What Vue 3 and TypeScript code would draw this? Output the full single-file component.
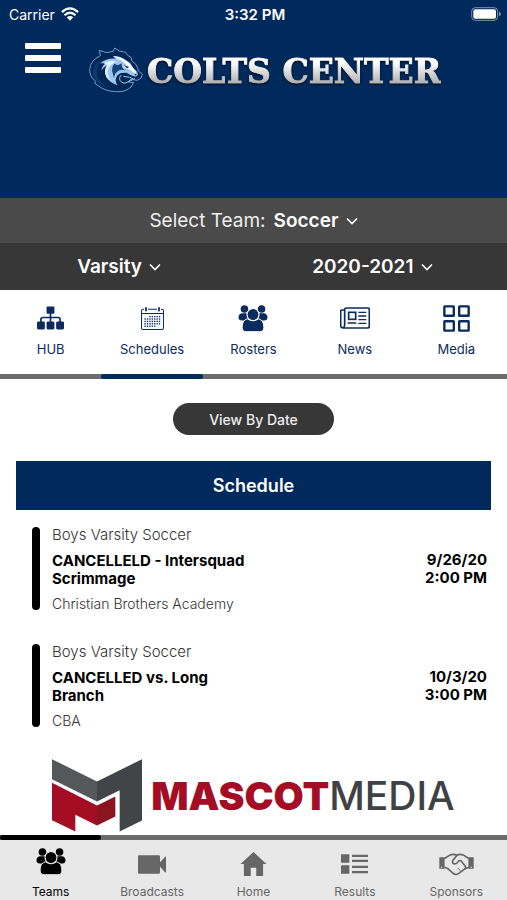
<script setup lang="ts">
import { ref } from 'vue'

type IconName =
  | 'hub' | 'calendar' | 'people' | 'news' | 'grid'
  | 'camera' | 'home' | 'list' | 'handshake'

interface NavItem {
  label: string
  icon: IconName
}

interface Game {
  team: string
  title: string
  place: string
  date: string
  time: string
}

const team = ref('Soccer')
const level = ref('Varsity')
const season = ref('2020-2021')

const tabs: NavItem[] = [
  { label: 'HUB', icon: 'hub' },
  { label: 'Schedules', icon: 'calendar' },
  { label: 'Rosters', icon: 'people' },
  { label: 'News', icon: 'news' },
  { label: 'Media', icon: 'grid' },
]
const activeTab = ref('Schedules')

const sections: NavItem[] = [
  { label: 'Teams', icon: 'people' },
  { label: 'Broadcasts', icon: 'camera' },
  { label: 'Home', icon: 'home' },
  { label: 'Results', icon: 'list' },
  { label: 'Sponsors', icon: 'handshake' },
]
const activeSection = ref('Teams')

const games: Game[] = [
  {
    team: 'Boys Varsity Soccer',
    title: 'CANCELLELD - Intersquad Scrimmage',
    place: 'Christian Brothers Academy',
    date: '9/26/20',
    time: '2:00 PM',
  },
  {
    team: 'Boys Varsity Soccer',
    title: 'CANCELLED vs. Long Branch',
    place: 'CBA',
    date: '10/3/20',
    time: '3:00 PM',
  },
]

const dots = [26, 33, 40, 47, 54].flatMap((y, row) =>
  [12, 19, 26, 33, 40, 47, 54]
    .filter((_, col) => !(row === 0 && col < 2) && !(row === 4 && col > 4))
    .map((x) => ({ x, y })),
)
</script>

<template>
  <div class="page">
    <svg class="sprite" aria-hidden="true">
      <symbol id="i-hub" viewBox="0 0 79 69">
        <rect x="28" y="1" width="23" height="21" rx="3" />
        <path d="M39.5 20V48M11.500 48V38Q11.500 33 17 33H62Q67.500 33 67.500 38V48" fill="none" stroke="currentColor" stroke-width="5" />
        <rect x="0" y="45" width="23" height="23" rx="4" />
        <rect x="28" y="45" width="23" height="23" rx="4" />
        <rect x="56" y="45" width="23" height="23" rx="4" />
      </symbol>
      <symbol id="i-calendar" viewBox="0 0 67 67">
        <path d="M9 6.500H6Q1.500 6.500 1.500 11V61Q1.500 65.500 6 65.500H61Q65.500 65.500 65.500 61V11Q65.500 6.500 61 6.500H58M20 6.500H47M2 19H65" fill="none" stroke="currentColor" stroke-width="3" />
        <rect x="12" y="0" width="5" height="13" rx="2" />
        <rect x="50" y="0" width="5" height="13" rx="2" />
        <rect v-for="d in dots" :key="`${d.x}-${d.y}`" :x="d.x - 2" :y="d.y" width="4" height="4" />
      </symbol>
      <symbol id="i-people" viewBox="0 0 88 82">
        <circle cx="18" cy="12" r="11.500" />
        <circle cx="70" cy="12" r="11.500" />
        <path d="M10 25H28V47H10Q0 47 0 37Q0 28 10 25ZM78 25H60V47H78Q88 47 88 37Q88 28 78 25Z" />
        <circle cx="44" cy="29" r="18" class="cut" stroke-width="4" />
        <path d="M27 42Q44 54 61 42Q77 46 77 68Q77 81 64 81H24Q11 81 11 68Q11 46 27 42Z" class="cut" stroke-width="3" />
        <circle cx="44" cy="29" r="16" />
      </symbol>
      <symbol id="i-news" viewBox="0 0 90 64">
        <path d="M14 7Q14 2 19 2H83Q88 2 88 7V57Q88 62 83 62H9Q2 62 2 54V12Q2 8 7 8H14V53Q14 60 8 62" fill="none" stroke="currentColor" stroke-width="5" />
        <rect x="26" y="15" width="21" height="21" fill="none" stroke="currentColor" stroke-width="5" />
        <path d="M55 15H79M55 26H79M55 37H79M23 47H49M55 48H79" stroke="currentColor" stroke-width="4" />
      </symbol>
      <symbol id="i-grid" viewBox="0 0 80 80">
        <g fill="none" stroke="currentColor" stroke-width="7">
          <rect x="4" y="4" width="28" height="28" rx="1" />
          <rect x="48" y="4" width="28" height="28" rx="1" />
          <rect x="4" y="48" width="28" height="28" rx="1" />
          <rect x="48" y="48" width="28" height="28" rx="1" />
        </g>
      </symbol>
      <symbol id="i-camera" viewBox="0 0 84 56">
        <rect width="66" height="56" rx="4" />
        <path d="M62 26L82 4Q84 3 84 6V50Q84 53 82 52L62 30Z" />
      </symbol>
      <symbol id="i-home" viewBox="0 0 76 70">
        <path d="M38 0L76 35H66V70H46V46H30V70H10V35H0Z" />
      </symbol>
      <symbol id="i-list" viewBox="0 0 81 59">
        <rect width="25" height="26" rx="2" />
        <rect y="33" width="25" height="26" rx="2" />
        <path d="M33 5H81M33 20H81M33 38H81M33 54H81" stroke="currentColor" stroke-width="7" />
      </symbol>
      <symbol id="i-handshake" viewBox="0 0 106 68">
        <path d="M1 12H17V47H1ZM89 12H105V47H89Z" />
        <circle cx="8" cy="42" r="2" fill="#e8e8e8" />
        <circle cx="98" cy="42" r="2" fill="#e8e8e8" />
        <g fill="none" stroke="currentColor" stroke-width="5" stroke-linejoin="round" stroke-linecap="round">
          <path d="M18 15L34 5Q45 1 54 6Q63 1 73 5L89 15M18 43L26 46L42 60Q50 68 60 61L80 46L89 43" />
          <path d="M55 6L43 20Q38 29 45 32Q53 34 60 23L66 22L78 37Q83 43 79 47" />
          <path d="M58 46L64 52" stroke-width="3" />
        </g>
      </symbol>
      <symbol id="i-chevron" viewBox="0 0 12 8">
        <path d="M1 1.500L6 6.500L11 1.500" fill="none" stroke="currentColor" stroke-width="1.600" />
      </symbol>
    </svg>

    <header class="masthead">
      <div class="status">
        <span class="carrier">
          Carrier
          <svg class="wifi" viewBox="0 0 56 42" aria-hidden="true">
            <g fill="none" stroke="#fff" stroke-width="7">
              <path d="M3 15Q28 -8 53 15" />
              <path d="M11 25Q28 9 45 25" />
            </g>
            <path d="M18 31Q28 23 38 31L28 42Z" fill="#fff" />
          </svg>
        </span>
        <span class="clock">3:32 PM</span>
        <svg class="battery" viewBox="0 0 90 42" aria-hidden="true">
          <rect x="2" y="2" width="78" height="38" rx="11" fill="none" stroke="#7d92af" stroke-width="3" />
          <rect x="7" y="7" width="68" height="28" rx="6" fill="#fff" />
          <path d="M84 14Q90 17 90 21Q90 25 84 28Z" fill="#7d92af" />
        </svg>
      </div>
      <div class="brand">
        <button class="menu" type="button" aria-label="Menu">
          <span></span><span></span><span></span>
        </button>
        <div class="logo">
          <svg class="horse" viewBox="266 141 162 138" aria-hidden="true">
            <path d="M300 167L297 151L319 158L339 154L343 144L356 153L376 157L382 166L392 172L395 184L405 191L412 204L414 213L426 222L422 234L411 241L398 239L384 246L400 248L392 261Q375 277 345 275Q311 273 291 255L283 250L286 244Q268 230 268 209Q270 181 300 167Z" fill="#032654" stroke="#6e9fd2" stroke-width="3" stroke-linejoin="round" />
            <path d="M278 211Q281 188 304 180Q286 201 290 225Q298 253 326 263Q305 260 290 245Q276 229 278 211Z" fill="#0a3973" />
            <path d="M299 190Q318 174 346 176L338 168Q359 167 376 180L390 189L398 203L410 215L413 224L406 230L392 226L378 218L362 219Q347 225 346 241Q346 249 352 256Q331 251 318 232Q310 215 323 196Q309 201 302 211Q306 197 315 190Z" fill="#9bc6ee" />
            <path d="M338 169Q363 170 382 186Q395 198 408 216L403 220Q384 204 366 201Q375 199 378 194Q363 180 338 169Z" fill="#fff" />
            <path d="M310 190Q329 180 348 185Q327 193 322 211Q320 230 334 244Q313 231 314 212Q315 202 321 195Z" fill="#e4f2fd" />
            <path d="M342 191Q332 203 337 219L341 235Q342 219 357 211Q367 207 376 212Q360 201 365 190L352 196Z" fill="#12427b" />
            <path d="M371 196L387 201L380 205ZM402 222L409 222L406 227Z" fill="#032654" />
            <path d="M363 225Q352 236 364 247Q377 254 389 240L404 236M369 229L388 232L398 236" fill="none" stroke="#9bc6ee" stroke-width="3" />
          </svg>
          <h1 class="wordmark">COLTS CENTER</h1>
        </div>
      </div>
    </header>

    <div class="filters">
      <div class="row team-row">
        <label for="team">Select Team:</label>
        <span class="pick">
          <select id="team" v-model="team"><option>Soccer</option></select>
          <svg aria-hidden="true"><use href="#i-chevron" /></svg>
        </span>
      </div>
      <div class="row split">
        <span class="pick">
          <select v-model="level" aria-label="Level"><option>Varsity</option></select>
          <svg aria-hidden="true"><use href="#i-chevron" /></svg>
        </span>
        <span class="pick">
          <select v-model="season" aria-label="Season"><option>2020-2021</option></select>
          <svg aria-hidden="true"><use href="#i-chevron" /></svg>
        </span>
      </div>
    </div>

    <nav class="tabs" aria-label="Team pages">
      <button
        v-for="t in tabs"
        :key="t.label"
        type="button"
        :class="{ active: t.label === activeTab }"
        @click="activeTab = t.label"
      >
        <span class="glyph"><svg :class="t.icon" aria-hidden="true"><use :href="`#i-${t.icon}`" /></svg></span>
        <span class="name">{{ t.label }}</span>
        <span class="track"><span></span></span>
      </button>
    </nav>

    <main>
      <button class="by-date" type="button">View By Date</button>
      <section class="schedule">
        <h2>Schedule</h2>
        <ul>
          <li v-for="g in games" :key="g.title">
            <div class="info">
              <p class="team">{{ g.team }}</p>
              <p class="title">{{ g.title }}</p>
              <p class="place">{{ g.place }}</p>
            </div>
            <div class="when">{{ g.date }}<br />{{ g.time }}</div>
          </li>
        </ul>
      </section>
    </main>

    <footer>
      <a class="sponsor" href="#">
        <svg viewBox="0 0 270 218" aria-hidden="true">
          <path d="M0 0L135 67V127L0 60Z" fill="#54585a" />
          <path d="M135 67L270 0V184L203 217V93L135 127Z" fill="#424547" />
          <path d="M0 71L135 139V199L70 167V217L0 183Z" fill="#a50d24" />
          <path d="M135 139L190 112V172L135 199Z" fill="#8a1420" />
        </svg>
        <span class="sponsor-name"><b>MASCOT</b>MEDIA</span>
      </a>
      <nav class="tabs bottom" aria-label="Main">
        <button
          v-for="s in sections"
          :key="s.label"
          type="button"
          :class="{ active: s.label === activeSection }"
          @click="activeSection = s.label"
        >
          <span class="track"><span></span></span>
          <span class="glyph"><svg :class="s.icon" aria-hidden="true"><use :href="`#i-${s.icon}`" /></svg></span>
          <span class="name">{{ s.label }}</span>
        </button>
      </nav>
    </footer>
  </div>
</template>

<style>
body {
  background: #fff;
}
</style>

<style scoped>
.page {
  display: flex;
  flex-direction: column;
  min-height: 100vh;
  font-family: Inter, "Liberation Sans", sans-serif;
  color: #000;
}
h1, h2, p, ul {
  margin: 0;
  padding: 0;
}
button, select {
  appearance: none;
  margin: 0;
  padding: 0;
  border: 0;
  background: none;
  color: inherit;
  font: inherit;
  cursor: pointer;
}
svg {
  display: block;
  fill: currentColor;
}
.sprite {
  position: absolute;
  width: 0;
  height: 0;
}
.cut {
  stroke: var(--surface, #fff);
}

.masthead {
  padding-bottom: 103px;
  background: #002a5c;
  color: #fff;
}
.status {
  display: grid;
  grid-template-columns: 1fr auto 1fr;
  align-items: center;
  height: 28px;
  padding: 0 6px 0 9px;
  font-size: 14px;
}
.carrier {
  display: flex;
  align-items: center;
  gap: 6px;
}
.wifi {
  width: 18px;
  height: 14px;
}
.clock {
  font-size: 15px;
  font-weight: 600;
}
.battery {
  width: 30px;
  height: 14px;
  justify-self: end;
}
.brand {
  display: flex;
  align-items: flex-start;
  gap: 28px;
  padding: 15px 25px 0;
}
.menu {
  display: grid;
  gap: 6px;
  width: 36px;
}
.menu span {
  height: 6px;
  border-radius: 1px;
  background: #fff;
}
.logo {
  display: flex;
  align-items: center;
  gap: 4px;
  padding-top: 2px;
}
.horse {
  width: 54px;
  height: 46px;
}
.wordmark {
  padding-top: 4px;
  font: 700 33px/46px "DejaVu Serif", serif;
  white-space: nowrap;
  color: transparent;
  background: linear-gradient(#fff 35%, #a9a9a9 80%);
  background-clip: text;
  -webkit-text-stroke: 1px transparent;
  filter: drop-shadow(0 1px 1px #000a1c);
}

.filters {
  color: #fff;
  font-size: 19px;
}
.row {
  display: flex;
  align-items: center;
  justify-content: center;
  gap: 8px;
  height: 47px;
  background: #373737;
}
.team-row {
  height: 45px;
  background: #4a4a4a;
}
.team-row label {
  color: #eee;
}
.split {
  display: grid;
  grid-template-columns: 47fr 53fr;
  justify-items: center;
  gap: 0;
}
.pick {
  display: flex;
  align-items: center;
  gap: 7px;
}
.pick select {
  font-weight: 600;
}
.pick svg {
  width: 12px;
  height: 8px;
}

.tabs {
  display: grid;
  grid-template-columns: repeat(5, 1fr);
  color: #0a2c5e;
}
.tabs button {
  display: flex;
  flex-direction: column;
  align-items: stretch;
}
.glyph {
  display: flex;
  align-items: center;
  justify-content: center;
  height: 32px;
  margin: 12px 0 7px;
}
.glyph svg {
  width: 27px;
  height: 24px;
}
.glyph svg.calendar {
  width: 23px;
  height: 23px;
}
.glyph svg.people {
  width: 30px;
  height: 27px;
}
.glyph svg.news {
  width: 30px;
  height: 22px;
}
.glyph svg.grid {
  width: 27px;
  height: 27px;
}
.glyph svg.camera {
  width: 28px;
  height: 19px;
}
.glyph svg.list {
  width: 27px;
  height: 20px;
}
.glyph svg.handshake {
  width: 35px;
  height: 23px;
}
.name {
  font-size: 13px;
  line-height: 16px;
  text-align: center;
}
.track {
  height: 5px;
  margin-top: 17px;
  background: #6b6b6b;
}
.track span {
  display: block;
  height: 5px;
  border-radius: 3px;
}
.active .track span {
  background: #002a5c;
}

main {
  display: flex;
  flex: 1;
  flex-direction: column;
  padding: 24px 16px 0;
}
.by-date {
  align-self: center;
  height: 32px;
  margin-bottom: 26px;
  padding: 0 36px;
  border-radius: 16px;
  background: #373737;
  color: #eee;
  font-size: 14px;
  font-weight: 500;
}
h2 {
  background: #002a5c;
  color: #fff;
  font-size: 18px;
  font-weight: 600;
  line-height: 49px;
  text-align: center;
}
ul {
  list-style: none;
}
li {
  display: flex;
  align-items: center;
  justify-content: space-between;
  padding: 17px 4px 17px 16px;
}
.info {
  position: relative;
  width: 205px;
  padding-left: 20px;
}
.info::before {
  content: "";
  position: absolute;
  inset: 0 auto 0 0;
  width: 8px;
  border-radius: 4px;
  background: #000;
}
.team {
  color: #333;
  font-size: 15px;
  font-weight: 300;
  line-height: 15px;
}
.title, .when {
  font-size: 15px;
  font-weight: 700;
  line-height: 18px;
}
.title {
  margin: 10px 0 9px;
}
.when {
  text-align: right;
}
.place {
  color: #333;
  font-size: 14px;
  font-weight: 300;
  line-height: 13px;
}

.sponsor {
  display: flex;
  align-items: center;
  justify-content: center;
  gap: 9px;
  padding-bottom: 3px;
  color: #3f4244;
  text-decoration: none;
}
.sponsor svg {
  width: 90px;
  height: 73px;
}
.sponsor-name {
  font-size: 39px;
  font-weight: 500;
  line-height: 44px;
}
.sponsor-name b {
  color: #a50d24;
  font-weight: 900;
}

.bottom {
  --surface: #e8e8e8;
  background: #e8e8e8;
  color: #666;
}
.bottom .track {
  margin: 0;
}
.bottom .glyph {
  margin: 8px 0 4px;
}
.bottom .people {
  margin-bottom: 5px;
}
.bottom .name {
  font-size: 12px;
}
.bottom .active {
  color: #000;
}
.bottom .active .track span {
  background: #000;
}
</style>
